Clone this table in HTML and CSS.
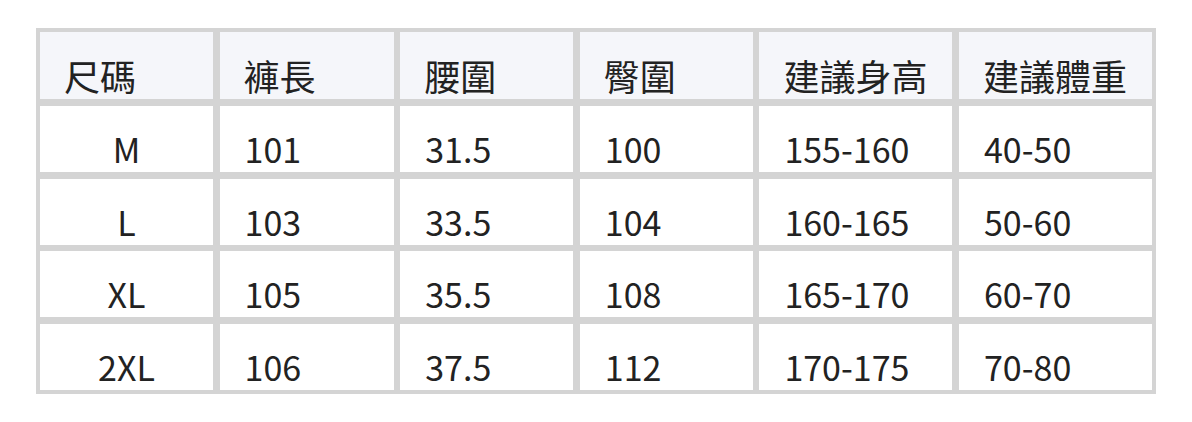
FILE: index.html
```html
<!DOCTYPE html>
<html lang="zh-Hant">
<head>
<meta charset="utf-8">
<title>尺碼表</title>
<link rel="stylesheet" href="styles.css">
</head>
<body>
<div class="page">
  <div class="size-table">
    <div class="cell head">尺碼</div>
    <div class="cell head">褲長</div>
    <div class="cell head">腰圍</div>
    <div class="cell head">臀圍</div>
    <div class="cell head">建議身高</div>
    <div class="cell head">建議體重</div>

    <div class="cell center">M</div>
    <div class="cell">101</div>
    <div class="cell">31.5</div>
    <div class="cell">100</div>
    <div class="cell">155-160</div>
    <div class="cell">40-50</div>

    <div class="cell center">L</div>
    <div class="cell">103</div>
    <div class="cell">33.5</div>
    <div class="cell">104</div>
    <div class="cell">160-165</div>
    <div class="cell">50-60</div>

    <div class="cell center">XL</div>
    <div class="cell">105</div>
    <div class="cell">35.5</div>
    <div class="cell">108</div>
    <div class="cell">165-170</div>
    <div class="cell">60-70</div>

    <div class="cell center">2XL</div>
    <div class="cell">106</div>
    <div class="cell">37.5</div>
    <div class="cell">112</div>
    <div class="cell">170-175</div>
    <div class="cell">70-80</div>
  </div>
</div>
</body>
</html>
```

FILE: styles.css
```css
html, body {
  margin: 0;
  padding: 0;
  background: #ffffff;
}

.page {
  padding: 28px 0 0 36px;
}

.size-table {
  display: inline-grid;
  grid-template-columns: 173px 174px 173px 173px 193px 193px;
  grid-template-rows: 67px 66px 66px 66px 66px;
  gap: 6.8px 6.6px;
  padding: 4px;
  background: #d4d4d4;
  font-family: "Noto Sans CJK TC", "Noto Sans", sans-serif;
  font-size: 34px;
  color: #222222;
}

.cell {
  display: flex;
  align-items: flex-end;
  padding: 0 0 6px 25px;
  line-height: 34px;
  background: #ffffff;
  box-sizing: border-box;
}

.head {
  background: #f5f6fa;
  font-size: 36px;
  line-height: 36px;
  padding-left: 24px;
}

.center {
  justify-content: center;
  padding-left: 0;
}
```
